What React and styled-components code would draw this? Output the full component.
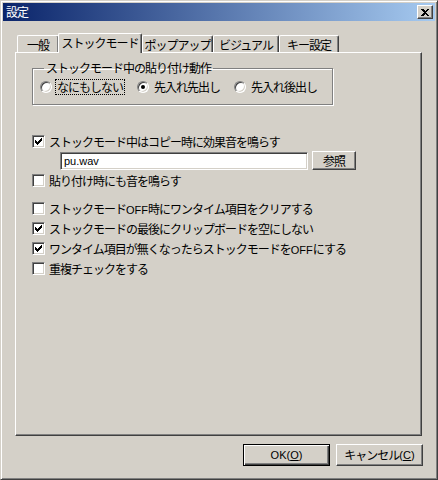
import React from "react"
import styled, { createGlobalStyle } from "styled-components"

const face = "#d4d0c8"
const light = "#ffffff"
const shadow = "#808080"
const dark = "#404040"

const GlobalStyle = createGlobalStyle`
  html, body {
    margin: 0;
    padding: 0;
    background: ${face};
  }
  body {
    font-family: "Noto Sans CJK JP", "Liberation Sans", sans-serif;
    font-size: 12px;
    letter-spacing: -1px;
    color: #000;
  }
`

const Window = styled.div`
  width: 438px;
  height: 480px;
  box-sizing: border-box;
  background: ${face};
  border: 1px solid;
  border-color: ${face} ${dark} ${dark} ${face};
  box-shadow: inset 1px 1px ${light}, inset -1px -1px ${shadow};
  padding: 2px;
  display: flex;
  flex-direction: column;
`

const TitleBar = styled.div`
  height: 18px;
  flex-shrink: 0;
  display: flex;
  align-items: center;
  justify-content: space-between;
  padding: 0 2px 0 3px;
  background: linear-gradient(to right, #0a246a, #a6caf0);
  color: #fff;
`

const Title = styled.span`
  font-size: 12px;
  line-height: 18px;
`

const CloseButton = styled.div`
  width: 16px;
  height: 14px;
  box-sizing: border-box;
  background: ${face};
  border: 1px solid;
  border-color: ${light} ${dark} ${dark} ${light};
  box-shadow: inset -1px -1px ${shadow};
  display: flex;
  align-items: center;
  justify-content: center;
`

const Body = styled.div`
  flex: 1;
  display: flex;
  flex-direction: column;
  padding: 12px 13px 11px 12px;
`

const TabStrip = styled.div`
  display: flex;
  align-items: flex-end;
  height: 19px;
  padding-left: 2px;
`

const Tab = styled.div`
  width: ${(p) => p.$w}px;
  height: ${(p) => (p.$active ? 20 : 17)}px;
  box-sizing: border-box;
  margin: ${(p) => (p.$active ? "0 0 -1px -1px" : "0")};
  position: relative;
  z-index: ${(p) => (p.$active ? 1 : 0)};
  background: ${face};
  border-top: 1px solid ${light};
  border-left: 1px solid ${light};
  border-right: 1px solid ${dark};
  border-radius: 2px 2px 0 0;
  box-shadow: inset -1px 0 ${shadow};
  display: flex;
  align-items: ${(p) => (p.$active ? "flex-start" : "center")};
  justify-content: center;
  padding-top: ${(p) => (p.$active ? 1 : 0)}px;
  line-height: 15px;
`

const Panel = styled.div`
  flex: 1;
  box-sizing: border-box;
  border: 1px solid;
  border-color: ${light} ${dark} ${dark} ${light};
  box-shadow: inset -1px -1px ${shadow};
  padding: 8px 16px 0 16px;
  display: flex;
  flex-direction: column;
  align-items: flex-start;
`

const GroupBox = styled.fieldset`
  width: 301px;
  height: 44px;
  box-sizing: border-box;
  margin: 0;
  padding: 5px 6px 0 7px;
  border: 1px solid ${shadow};
  box-shadow: inset 1px 1px ${light}, 1px 1px ${light};
  display: flex;
  align-items: center;
  gap: 13px;
`

const Legend = styled.legend`
  padding: 0 2px;
  margin-left: 4px;
  line-height: 14px;
`

const RadioItem = styled.label`
  display: flex;
  align-items: center;
  gap: 4px;
  line-height: 14px;
`

const RadioCircle = styled.span`
  width: 12px;
  height: 12px;
  box-sizing: border-box;
  border-radius: 50%;
  border: 1px solid;
  border-color: ${shadow} ${light} ${light} ${shadow};
  box-shadow: inset 1px 1px ${dark}, inset -1px -1px ${face};
  background: #fff;
  display: flex;
  align-items: center;
  justify-content: center;
  &::after {
    content: "";
    width: 4px;
    height: 4px;
    border-radius: 50%;
    background: ${(p) => (p.$checked ? "#000" : "transparent")};
  }
`

const RadioText = styled.span`
  padding: 0 1px;
  outline: ${(p) => (p.$focus ? "1px dotted #000" : "none")};
`

const CheckRow = styled.label`
  height: 20px;
  display: flex;
  align-items: center;
  gap: 4px;
  margin-top: ${(p) => p.$mt || 0}px;
`

const CheckBoxFrame = styled.span`
  width: 13px;
  height: 13px;
  box-sizing: border-box;
  border: 1px solid;
  border-color: ${shadow} ${light} ${light} ${shadow};
  box-shadow: inset 1px 1px ${dark}, inset -1px -1px ${face};
  background: #fff;
  display: flex;
  align-items: center;
  justify-content: center;
`

const FileRow = styled.div`
  display: flex;
  align-items: center;
  gap: 4px;
  margin: 0 0 0 28px;
`

const TextField = styled.div`
  width: 248px;
  height: 18px;
  box-sizing: border-box;
  border: 1px solid;
  border-color: ${shadow} ${light} ${light} ${shadow};
  box-shadow: inset 1px 1px ${dark}, inset -1px -1px ${face};
  background: #fff;
  padding: 0 3px;
  line-height: 16px;
  letter-spacing: 0;
  font-family: "Liberation Sans", sans-serif;
  font-size: 11px;
`

const Button = styled.div`
  width: ${(p) => p.$w}px;
  height: ${(p) => p.$h}px;
  box-sizing: border-box;
  background: ${face};
  border: 1px solid;
  border-color: ${(p) =>
    p.$default ? "#000" : `${light} ${dark} ${dark} ${light}`};
  box-shadow: ${(p) =>
    p.$default
      ? `inset 1px 1px ${light}, inset -1px -1px ${dark}, inset -2px -2px ${shadow}`
      : `inset -1px -1px ${shadow}`};
  display: flex;
  align-items: center;
  justify-content: center;
  line-height: 14px;
  u {
    text-decoration: underline;
    text-underline-offset: 1px;
  }
`

const Footer = styled.div`
  display: flex;
  justify-content: flex-end;
  gap: 6px;
  margin: 8px -1px 0 0;
`

const Latin = styled.span`
  letter-spacing: 0;
  font-family: "Liberation Sans", sans-serif;
  font-size: 11px;
`

const CheckMark = () => (
  <svg width="7" height="7" viewBox="0 0 7 7" shapeRendering="crispEdges">
    <path
      d="M0 2h1v1h1v1h1v-1h1v-1h1v-1h1v-1h1v3h-1v1h-1v1h-1v1h-1v1h-1v-1h-1v-1h-1z"
      fill="#000"
    />
  </svg>
)

const CloseIcon = () => (
  <svg width="8" height="7" viewBox="0 0 8 7" shapeRendering="crispEdges">
    <path d="M0 0h2l2 2 2-2h2l-3 3.5 3 3.5h-2l-2-2-2 2h-2l3-3.5z" fill="#000" />
  </svg>
)

const CheckBox = ({ checked, children, mt }) => (
  <CheckRow $mt={mt}>
    <CheckBoxFrame>{checked && <CheckMark />}</CheckBoxFrame>
    <span>{children}</span>
  </CheckRow>
)

const Radio = ({ checked, focus, children }) => (
  <RadioItem>
    <RadioCircle $checked={checked} />
    <RadioText $focus={focus}>{children}</RadioText>
  </RadioItem>
)

const tabs = [
  { label: "一般", w: 42 },
  { label: "ストックモード", w: 84, active: true },
  { label: "ポップアップ", w: 71 },
  { label: "ビジュアル", w: 66 },
  { label: "キー設定", w: 60 },
]

const App = () => {
  return (
    <>
      <GlobalStyle />
      <Window>
        <TitleBar>
          <Title>設定</Title>
          <CloseButton>
            <CloseIcon />
          </CloseButton>
        </TitleBar>
        <Body>
          <TabStrip>
            {tabs.map((t) => (
              <Tab key={t.label} $w={t.w} $active={t.active}>
                {t.label}
              </Tab>
            ))}
          </TabStrip>
          <Panel>
            <GroupBox>
              <Legend>ストックモード中の貼り付け動作</Legend>
              <Radio focus>なにもしない</Radio>
              <Radio checked>先入れ先出し</Radio>
              <Radio>先入れ後出し</Radio>
            </GroupBox>
            <CheckBox checked mt={26}>
              ストックモード中はコピー時に効果音を鳴らす
            </CheckBox>
            <FileRow>
              <TextField>pu.wav</TextField>
              <Button $w={44} $h={19}>
                参照
              </Button>
            </FileRow>
            <CheckBox>貼り付け時にも音を鳴らす</CheckBox>
            <CheckBox mt={8}>
              ストックモード<Latin>OFF</Latin>時にワンタイム項目をクリアする
            </CheckBox>
            <CheckBox checked>ストックモードの最後にクリップボードを空にしない</CheckBox>
            <CheckBox checked>
              ワンタイム項目が無くなったらストックモードを<Latin>OFF</Latin>にする
            </CheckBox>
            <CheckBox>重複チェックをする</CheckBox>
          </Panel>
          <Footer>
            <Button $w={87} $h={22} $default>
              <Latin>
                OK(<u>O</u>)
              </Latin>
            </Button>
            <Button $w={87} $h={22}>
              キャンセル<Latin>(<u>C</u>)</Latin>
            </Button>
          </Footer>
        </Body>
      </Window>
    </>
  )
}

export default App
